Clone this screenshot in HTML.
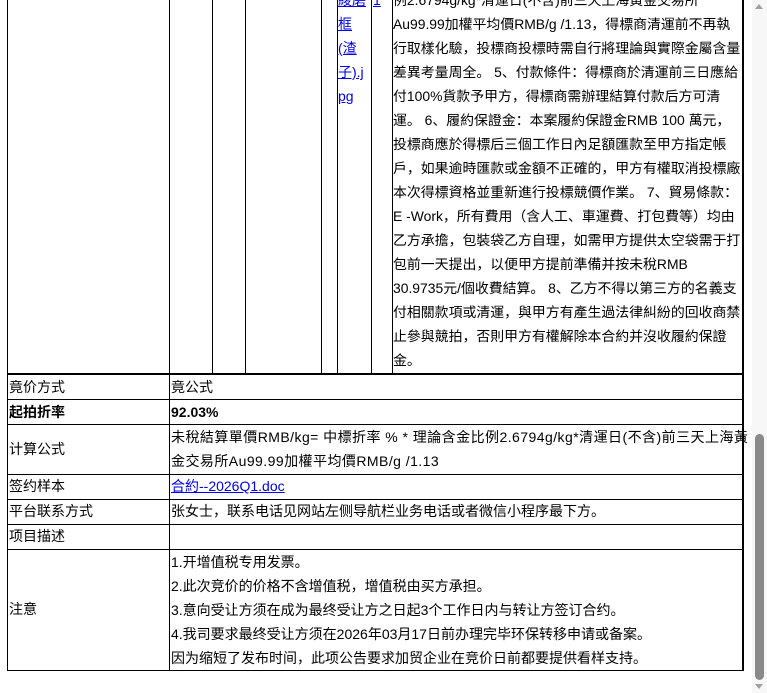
<!DOCTYPE html>
<html><head><meta charset="utf-8"><style>
*{margin:0;padding:0;box-sizing:border-box}
body{width:767px;height:693px;overflow:hidden;background:#fff;font-family:"Liberation Sans","Noto Sans CJK SC",sans-serif;font-size:14px;color:#000;position:relative}
.v{position:absolute;background:#000;width:1px}
.h{position:absolute;background:#000;height:1px}
.t{position:absolute;white-space:nowrap;line-height:24px}
a{color:#00e;text-decoration:underline}
</style></head><body>
<div class="v" style="left:7px;top:0;height:670px"></div>
<div class="v" style="left:169px;top:0;height:670px"></div>
<div class="v" style="left:212px;top:0;height:374px"></div>
<div class="v" style="left:245px;top:0;height:374px"></div>
<div class="v" style="left:321px;top:0;height:374px"></div>
<div class="v" style="left:337px;top:0;height:374px"></div>
<div class="v" style="left:371px;top:0;height:374px"></div>
<div class="v" style="left:392px;top:0;height:374px"></div>
<div class="v" style="left:742px;top:0;height:671px;width:2px"></div>
<div class="h" style="left:7px;top:373px;width:737px;height:2px"></div>
<div class="t" style="left:338px;top:-12px"><a>綾磨</a><br><a>框</a><br><a>(渣</a><br><a>子).j</a><br><a>pg</a></div>
<div class="t" style="left:373px;top:-12px"><a>1</a></div>
<div class="t" style="left:393px;top:-12px;font-size:13.9px">例2.6794g/kg*清運日(不含)前三天上海黃金交易所<br>Au99.99加權平均價RMB/g /1.13，得標商清運前不再執<br>行取樣化驗，投標商投標時需自行將理論與實際金屬含量<br>差異考量周全。 5、付款條件：得標商於清運前三日應給<br>付100%貨款予甲方，得標商需辦理結算付款后方可清<br>運。 6、履約保證金：本案履約保證金RMB 100 萬元，<br>投標商應於得標后三個工作日內足額匯款至甲方指定帳<br>戶，如果逾時匯款或金額不正確的，甲方有權取消投標廠<br>本次得標資格並重新進行投標競價作業。 7、貿易條款：<br>E -Work，所有費用（含人工、車運費、打包費等）均由<br>乙方承擔，包裝袋乙方自理，如需甲方提供太空袋需于打<br>包前一天提出，以便甲方提前準備并按未稅RMB<br>30.9735元/個收費結算。 8、乙方不得以第三方的名義支<br>付相關款項或清運，與甲方有產生過法律糾紛的回收商禁<br>止參與競拍，否則甲方有權解除本合約并沒收履約保證<br>金。</div>
<div class="h" style="left:7px;top:399px;width:737px"></div>
<div class="h" style="left:7px;top:424px;width:737px"></div>
<div class="h" style="left:7px;top:474px;width:737px"></div>
<div class="h" style="left:7px;top:499px;width:737px"></div>
<div class="h" style="left:7px;top:524px;width:737px"></div>
<div class="h" style="left:7px;top:549px;width:737px"></div>
<div class="h" style="left:7px;top:670px;width:737px"></div>
<div class="t" style="left:9px;top:375px">竟价方式</div>
<div class="t" style="left:171px;top:375px">竟公式</div>
<div class="t" style="left:9px;top:400px;font-weight:bold">起拍折率</div>
<div class="t" style="left:171px;top:400px;font-weight:bold">92.03%</div>
<div class="t" style="left:9px;top:437px">计算公式</div>
<div class="t" style="left:171px;top:425px;letter-spacing:0.45px">未稅結算單價RMB/kg= 中標折率 % * 理論含金比例2.6794g/kg*清運日(不含)前三天上海黃<br>金交易所Au99.99加權平均價RMB/g /1.13</div>
<div class="t" style="left:9px;top:474px">签约样本</div>
<div class="t" style="left:171px;top:474px"><a>合約--2026Q1.doc</a></div>
<div class="t" style="left:9px;top:499px">平台联系方式</div>
<div class="t" style="left:171px;top:499px">张女士，联系电话见网站左侧导航栏业务电话或者微信小程序最下方。</div>
<div class="t" style="left:9px;top:524px">项目描述</div>
<div class="t" style="left:9px;top:597px">注意</div>
<div class="t" style="left:171px;top:550px">1.开增值税专用发票。<br>2.此次竞价的价格不含增值税，增值税由买方承担。<br>3.意向受让方须在成为最终受让方之日起3个工作日内与转让方签订合约。<br>4.我司要求最终受让方须在2026年03月17日前办理完毕环保转移申请或备案。<br>因为缩短了发布时间，此项公告要求加贸企业在竞价日前都要提供看样支持。</div>
<div style="position:absolute;left:752px;top:0;width:15px;height:693px;background:#f7f7f7"></div>
<div style="position:absolute;left:755px;top:4px;width:0;height:0;border-left:4.5px solid transparent;border-right:4.5px solid transparent;border-bottom:5px solid #a0a0a0"></div>
<div style="position:absolute;left:755px;top:684px;width:0;height:0;border-left:4.5px solid transparent;border-right:4.5px solid transparent;border-top:5px solid #a0a0a0"></div>
<div style="position:absolute;left:755px;top:434px;width:9px;height:246px;background:#8a8a8a;border-radius:5px"></div>
</body></html>
